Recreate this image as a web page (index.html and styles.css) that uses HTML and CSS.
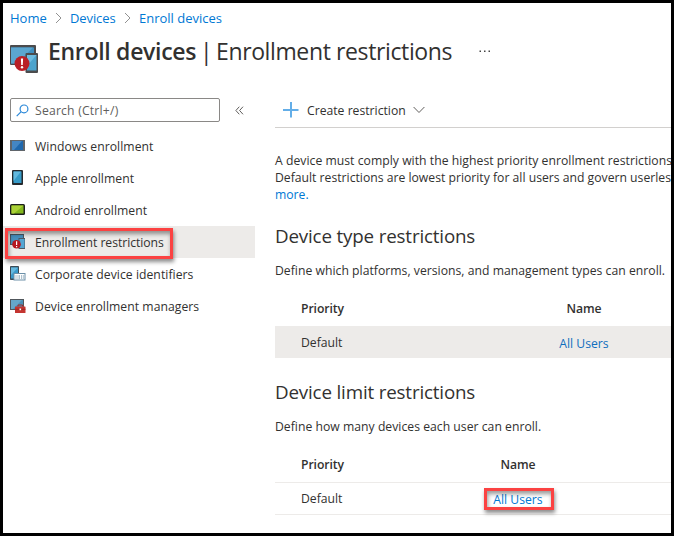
FILE: index.html
```html
<!DOCTYPE html>
<html lang="en">
<head>
<meta charset="utf-8">
<title>Enroll devices | Enrollment restrictions</title>
<link rel="stylesheet" href="styles.css">
</head>
<body>
<div class="frame">
  <nav class="crumbs">
    <a class="c1">Home</a>
    <svg width="7" height="12" viewBox="0 0 7 12"><path d="M1 1l5 5-5 5"/></svg>
    <a class="c2">Devices</a>
    <svg width="7" height="12" viewBox="0 0 7 12"><path d="M1 1l5 5-5 5"/></svg>
    <a class="c3">Enroll devices</a>
  </nav>
  <header class="title">
    <svg class="title-icon" width="28" height="28" viewBox="0 0 28 28">
      <rect x="0" y="0" width="26" height="20" rx="1" fill="#4b4b4d"/>
      <rect x="1" y="2.500" width="23" height="16" fill="#3f8fc0"/>
      <path d="M1 2.500h22L7 18.500H1z" fill="#5ba6d0"/>
      <rect x="15.500" y="8" width="12.500" height="20" rx="1" fill="#4b4b4d"/>
      <rect x="17" y="10" width="9.500" height="15.500" fill="#4ba3cd"/>
      <path d="M17 10h9.500L17 21z" fill="#6dbbe0"/>
      <circle cx="12" cy="18.500" r="7.500" fill="#b91f26"/>
      <path d="M10.900 13.500h2.200l-.3 6.500h-1.600z" fill="#fff"/>
      <circle cx="12" cy="22.300" r="1.200" fill="#fff"/>
    </svg>
    <h1><b>Enroll devices</b><i>|</i><span>Enrollment restrictions</span></h1>
    <svg class="dots" width="12" height="3" viewBox="0 0 12 3"><path d="M.5.5H2V2H.5zM5 .5h1.500V2H5zM9.500.5H11V2H9.500z"/></svg>
  </header>
  <div class="body">
    <aside>
      <div class="searchrow">
        <div class="search">
          <svg width="13" height="13" viewBox="0 0 13 13"><circle cx="8" cy="4.900" r="3.900"/><path d="M5.200 7.700L.7 12.200"/></svg>
          <span>Search (Ctrl+/)</span>
        </div>
        <svg class="collapse" width="9" height="9" viewBox="0 0 9 9"><path d="M4.300.7L.9 4.500l3.400 3.800M8 .7L4.600 4.500 8 8.300"/></svg>
      </div>
      <ul>
        <li>
          <svg width="16" height="16" viewBox="0 0 16 16"><rect x="0" y="2" width="15" height="11" fill="#60656b"/><rect x="2" y="3" width="11" height="9" fill="#1f68ae"/><path d="M2 3h10L4 12H2z" fill="#4486c4"/></svg>
          <span>Windows enrollment</span>
        </li>
        <li>
          <svg width="16" height="16" viewBox="0 0 16 16"><rect x="2" y="0" width="11" height="15" rx="1" fill="#25292d"/><rect x="3.500" y="1.500" width="8" height="11.500" fill="#369bc8"/><path d="M3.500 1.500h7.500L3.500 11z" fill="#62b9df"/></svg>
          <span>Apple enrollment</span>
        </li>
        <li>
          <svg width="16" height="16" viewBox="0 0 16 16"><rect x="0" y="2" width="15" height="11" rx="1.500" fill="#1c1f1c"/><rect x="1.500" y="3.500" width="12" height="8" fill="#83b81e"/><path d="M1.500 3.500h12L4 11.500H1.500z" fill="#aad136"/></svg>
          <span>Android enrollment</span>
        </li>
        <li class="selected">
          <svg width="16" height="16" viewBox="0 0 16 16"><rect x="0" y="0" width="14" height="11" fill="#4c5963"/><rect x="1" y="1" width="12" height="9" fill="#468fbd"/><rect x="8.500" y="4" width="6.500" height="11" fill="#4c5963"/><rect x="9.500" y="5" width="5" height="9" fill="#54a6d3"/><circle cx="6.500" cy="10.200" r="4.300" fill="#b6171f"/><path d="M6 7.300h1.200v3.800H6zM6 12h1.200v1.200H6z" fill="#fff"/></svg>
          <span class="tight">Enrollment restrictions</span>
          <div class="mark"></div>
        </li>
        <li>
          <svg width="16" height="16" viewBox="0 0 16 16"><rect x="0" y="0" width="9" height="14" rx=".8" fill="#3c4b56"/><rect x="1" y="1.500" width="7" height="11" fill="#3999ca"/><path d="M1 1.500h7L1 9z" fill="#66b9df"/><rect x="4" y="7.500" width="11" height="6.500" fill="#fff" stroke="#6c90a8"/><path d="M6 9v4M8 9v4M9.500 9v4M11.500 9v4M13.300 9v4" stroke="#8ba6b8" stroke-width=".7"/></svg>
          <span>Corporate device identifiers</span>
        </li>
        <li>
          <svg width="16" height="16" viewBox="0 0 16 16"><rect x="0" y="1" width="14" height="11" fill="#50565b"/><rect x="1" y="2" width="12" height="9" fill="#4a90b8"/><path d="M1 2h11L3 11H1z" fill="#65a6c9"/><path d="M8 8.500V7h4.500v1.500" stroke="#9f2825" fill="none"/><rect x="5" y="8.500" width="10.500" height="6.500" rx=".5" fill="#c43530"/><path d="M5 11.300h10.500" stroke="#902522" stroke-width=".8"/><path d="M9.500 10.500h1.600v1.700H9.500z" fill="#fff"/></svg>
          <span>Device enrollment managers</span>
        </li>
      </ul>
    </aside>
    <main>
      <div class="command">
        <svg width="16" height="16" viewBox="0 0 16 16"><path d="M8 0v15.500M0 8h15.500" stroke="#63aee8" stroke-width="2"/></svg>
        <span>Create restriction</span>
        <svg class="chev" width="12" height="8" viewBox="0 0 12 8"><path d="M.6 1L6 6.500 11.400 1"/></svg>
      </div>
      <p class="intro"><span class="i1">A device must comply with the highest priority enrollment restrictions</span><br><span>Default restrictions are lowest priority for all users and govern userles</span><br><a>more.</a></p>
      <h2 class="h-type">Device type restrictions</h2>
      <p class="desc">Define which platforms, versions, and management types can enroll.</p>
      <div class="table type">
        <div class="row head"><span>Priority</span><span class="name">Name</span></div>
        <div class="row shaded"><span>Default</span><a class="name">All Users</a></div>
      </div>
      <h2 class="h-limit">Device limit restrictions</h2>
      <p class="desc">Define how many devices each user can enroll.</p>
      <div class="table limit">
        <div class="row head"><span>Priority</span><span class="name">Name</span></div>
        <div class="row"><span>Default</span><a class="name">All Users<div class="mark"></div></a></div>
      </div>
    </main>
  </div>
</div>
</body>
</html>
```
FILE: styles.css
```css
* { box-sizing: border-box; }
body {
  margin: 0;
  font-family: "Open Sans", "Noto Sans", sans-serif;
  font-size: 12.2px;
  color: #323130;
  background: #fff;
}
h1, h2, p, ul { margin: 0; padding: 0; font-weight: 400; }
svg { flex: none; display: block; }
.frame {
  width: 674px;
  height: 536px;
  border: 3px solid #000;
  overflow: hidden;
  white-space: nowrap;
}
.crumbs {
  display: flex;
  align-items: center;
  height: 30px;
  padding-left: 7px;
  font-size: 13px;
  color: #0078d4;
}
.crumbs svg { margin: 0 8px; fill: none; stroke: #919191; }
.c1 { width: 37px; }
.c2 { width: 46px; letter-spacing: -.1px; }
.title { display: flex; height: 60px; padding: 12px 0 0 7px; }
.title-icon { margin-right: 10px; }
h1 {
  display: flex;
  margin-top: -8px;
  height: 28px;
  font-size: 23px;
  line-height: 28px;
}
h1 b { font-weight: 600; width: 152px; letter-spacing: -.3px; }
h1 i { font-style: normal; font-weight: 400; width: 16px; }
h1 span { width: 263px; letter-spacing: -.38px; }
.dots { margin-top: 5px; fill: #444; }
.body { display: flex; }
aside { width: 252px; }
.searchrow { display: flex; align-items: center; padding: 5px 0 0 7px; }
.search {
  display: flex;
  align-items: center;
  width: 210px;
  height: 24px;
  padding-left: 5px;
  border: 1px solid #8a8886;
  border-radius: 2px;
  color: #605e5c;
}
.search span { letter-spacing: .2px; }
.search svg { margin-right: 6px; fill: none; stroke: #2b88d8; stroke-width: 1.2; }
.collapse { margin-left: 15px; fill: none; stroke: #605e5c; }
ul { list-style: none; margin-top: 8px; }
li {
  position: relative;
  display: flex;
  align-items: center;
  height: 32px;
  padding-left: 7px;
  letter-spacing: .04px;
}
li > svg { margin-right: 9px; }
.tight { letter-spacing: -.04px; }
.selected { background: #edebe9; }
.mark {
  position: absolute;
  border: 3px solid #fb4242;
  box-shadow: 1px 3px 4px rgba(0,0,0,.45), inset 1px 3px 4px rgba(0,0,0,.4);
}
li .mark { left: 2px; top: 2px; width: 168px; height: 31px; }
main { width: 416px; padding-left: 20px; }
.command {
  display: flex;
  align-items: center;
  height: 35px;
  padding-left: 8px;
  border-bottom: 1px solid #d2d0ce;
}
.command span { width: 98px; margin: 0 8px; }
.chev { fill: none; stroke: #605e5c; }
.intro { margin-top: 24px; line-height: 17px; }
.i1 { letter-spacing: .03px; }
a { color: #0078d4; }
h2 { font-size: 18.800px; line-height: 24px; letter-spacing: -.17px; }
.h-type { margin-top: 21px; }
.desc { line-height: 17px; margin-top: 14px; letter-spacing: .02px; }
.row { display: flex; align-items: center; height: 32px; padding-left: 26px; }
.row .name { text-align: center; }
.head { font-weight: 600; height: 34px; letter-spacing: -.08px; }
.type { margin-top: 13px; }
.type .head { padding-bottom: 2px; }
.type .name { width: 50px; }
.type span:first-child { width: 258px; }
.shaded { background: #edebe9; }
.shaded a { color: #106ebe; padding-top: 2px; }
.h-limit { margin-top: 22px; }
.limit { margin-top: 13px; }
.limit .row { border-bottom: 1px solid #edebe9; }
.limit .head { height: 35px; padding-bottom: 1px; }
.limit span:first-child { width: 192px; }
.limit .name { position: relative; width: 50px; }
.limit a.name { top: 1px; }
.limit .mark { left: -9px; top: -3px; width: 70px; height: 22px; }
```
